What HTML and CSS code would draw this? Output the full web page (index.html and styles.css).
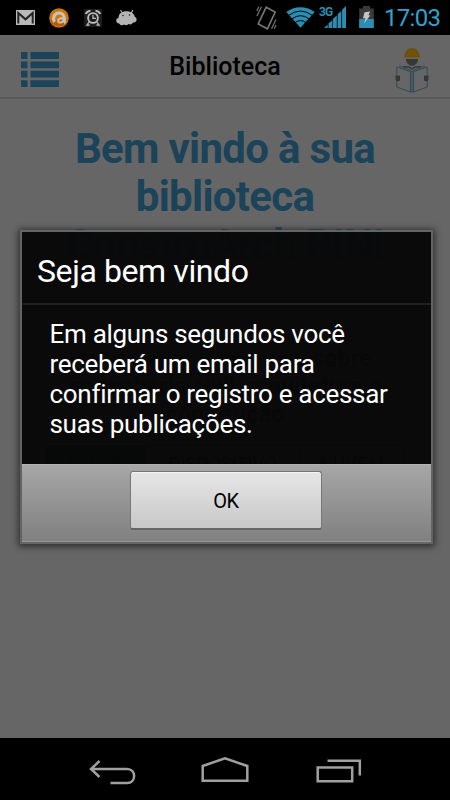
FILE: index.html
```html
<!DOCTYPE html>
<html lang="pt-BR">
<head>
  <meta charset="UTF-8">
  <meta name="viewport" content="width=device-width, initial-scale=1.0">
  <title>Biblioteca</title>
  <link rel="stylesheet" href="styles.css">
</head>
<body>
  <div class="status-bar">
    <div class="notifications">
      <svg class="icon-mail" width="19" height="15" viewBox="0 0 19 15">
        <rect width="19" height="15" fill="#b9b9b9"/>
        <path d="M2.3 13.5V3l7.2 6.3L16.7 3v10.5" fill="none" stroke="#222" stroke-width="2"/>
      </svg>
      <svg class="icon-avast" width="20" height="20" viewBox="0 0 20 20">
        <circle cx="10" cy="10" r="9.8" fill="#cb790c"/>
        <path d="M1 12a9.5 9.5 0 0 0 18 0z" fill="#b95c09"/>
        <path d="M5.500 14C3 9.500 6 5 10 5s5.300 3 5.300 5.500c0 2.500 0 3.500 1.200 4.500" fill="none" stroke="#c8c3bd" stroke-width="3"/>
        <path d="M14.500 10.500c-2.500-.5-5.500 0-5.500 2.300 0 2.500 4.500 2.200 5.500-.6" fill="none" stroke="#c8c3bd" stroke-width="2"/>
      </svg>
      <svg class="icon-alarm" width="18" height="18" viewBox="0 0 18 18">
        <rect width="18" height="18" rx="1" fill="#1d1d1d"/>
        <g fill="none" stroke="#bcbcbc">
          <circle cx="9" cy="9" r="4.900" stroke-width="1.900"/>
          <path d="M1.800 5Q3 2 6.500 1.700M16.200 5Q15 2 11.500 1.700" stroke-width="2"/>
          <path d="M9 6v3.400h3M5 13l-2 3h2.500M13 13l2 3h-2.500" stroke-width="1.300"/>
        </g>
      </svg>
      <svg class="icon-droid" width="21" height="17" viewBox="0 0 21 17">
        <path d="M4.500 1l2 3M16.800 1l-1.500 3" stroke="#b4b4b4" stroke-width="1.200"/>
        <path d="M2.500 9C2.500 4.500 6 2.300 10.500 2.300S18.500 5 18.800 8c2.200.5 2.300 3.500.9 4.800-1 .8-2 .8-2.900.9-1 2-3 2-4.300 1.200-1.500 1.500-3 1.600-4.300.6-2 1.200-4 1-5-1C1 14.300.2 13 .2 11.500.2 10 1.200 9 2.500 9z" fill="#b4b4b4"/>
        <circle cx="7" cy="6.500" r=".8" fill="#222"/><circle cx="13.500" cy="6" r=".8" fill="#222"/>
      </svg>
    </div>
    <div class="system-icons">
      <svg class="icon-vibrate" width="21" height="24" viewBox="0 0 21 24">
        <g fill="none" stroke="#777">
          <path d="M10.200 1.200l9 4.800-7.800 16.800-9.200-4.900z" stroke-width="1.600"/>
          <path d="M5.500.8L.9 10M2.800.8L.8 5M20 13.500l-4.500 9.300M20 19l-1.800 3.800" stroke-width="1.200"/>
        </g>
      </svg>
      <svg class="icon-wifi" width="29" height="21" viewBox="0 0 29 21">
        <path d="M14.500 20.700L.3 5C8-1.300 21-1.300 28.700 5z" fill="#2b8db3"/>
        <path d="M2.800 8.300q11.700-8.500 23.400 0M6 11.800q8.500-6.200 17 0M9.200 15.500q5.300-3.800 10.600 0" fill="none" stroke="#000" stroke-width="1"/>
      </svg>
      <div class="signal">
        <span class="signal-type">3G</span>
        <svg width="22" height="22" viewBox="0 0 22 22">
          <g fill="#2b8db3">
            <path d="M0 22l3.700-3.500V22zM4.500 22v-4.500L8.300 14v8zM9 22v-9.200l3.800-3.400V22zM13.600 22V8.200l3.700-3.300V22zM18.100 22V3.700L22 0v22z"/>
          </g>
        </svg>
      </div>
      <svg class="icon-battery" width="15" height="22" viewBox="0 0 15 22">
        <path d="M4 0h7v2.500h3.800V22H.2V2.500H4z" fill="#3a3a3a"/>
        <path d="M.2 13h14.600v9H.2z" fill="#2b8db3"/>
        <path d="M5.500 6.300L11 5.600l-1.500 3.700 1.800.3-6.300 8 1.600-5-2.600-.4z" fill="#c5c5c5"/>
      </svg>
      <span class="clock">17:03</span>
    </div>
  </div>

  <header class="app-header">
    <svg class="menu-icon" width="38" height="35" viewBox="0 0 38 35" fill="#1b4359">
      <path d="M0 0h6.500v7H0zM9.500 0H38v7H9.500zM0 9.500h6.500v6.700H0zM9.500 9.500H38v6.700H9.500zM0 18.800h6.500v6.700H0zM9.500 18.800H38v6.700H9.500zM0 28.200h6.500V35H0zM9.500 28.200H38V35H9.500z"/>
    </svg>
    <h1>Biblioteca</h1>
    <svg class="reader-icon" width="34" height="46" viewBox="0 0 34 46">
      <path d="M11 12h12c0 4-3 7-6 7s-6-3-6-7z" fill="#383838"/>
      <path d="M9 10.500C9.500 4 13 1 17 1s7.500 3 8 9.500z" fill="#6f5109"/>
      <path d="M8 20q6-1 9 2 3-3 9-2" fill="none" stroke="#383838" stroke-width="1.500"/>
      <g fill="none" stroke="#2f4b5a" stroke-width="1">
        <path d="M1.800 20v20l13.700 5V24.500zM32.200 20v20l-13.700 5V24.500zM15.500 24.500h3M15.500 45h3M17 24v21M4 19l12 4.500M30 19l-12 4.500"/>
      </g>
      <path d="M.5 28.500h4.500v5l-2.500 1-2-1.500zM33.500 28.500H29v5l2.500 1 2-1.500z" fill="#383838"/>
    </svg>
  </header>

  <main class="content">
    <h2>Bem vindo à sua<br>biblioteca<br>ConstruArch PINI</h2>
    <p class="intro">seus livros e manuais sobre<br>engenharia civil, arquitetura e<br>construção</p>
    <div class="tabs">
      <span class="tab active">TODOS</span>
      <span class="tab">DISPOSITIVO</span>
      <span class="tab">NUVEM</span>
    </div>
  </main>

  <nav class="nav-bar">
    <svg width="47" height="26" viewBox="0 0 47 26" fill="none" stroke="#a0a0a0" stroke-width="2.500">
      <path d="M10.500 1L2 9l8.500 8M2 9h36c9.500 0 9.500 14 0 14H21.500"/>
    </svg>
    <svg class="home" width="48" height="26" viewBox="0 0 48 26" fill="none" stroke="#a0a0a0" stroke-width="2.500">
      <path d="M1.700 23.800V9L24 1.300 46.300 9v14.800z"/>
    </svg>
    <svg class="recent" width="46" height="24" viewBox="0 0 46 24" fill="none" stroke="#a0a0a0" stroke-width="2.500">
      <path d="M1.700 8.500h34.500v13.800H1.700zM11.500 1.800h32.300v14.700"/>
    </svg>
  </nav>

  <div class="dialog">
    <h3 class="dialog-title">Seja bem vindo</h3>
    <p class="dialog-text">Em alguns segundos você<br>receberá um email para<br>confirmar o registro e acessar<br>suas publicações.</p>
    <div class="dialog-footer">
      <button class="ok">OK</button>
    </div>
  </div>
</body>
</html>
```
FILE: styles.css
```css
* {
  box-sizing: border-box;
}
body {
  font-family: Roboto, "Liberation Sans", sans-serif;
  background: #666;
  color: #000;
  margin: 0;
  height: 800px;
  display: flex;
  flex-direction: column;
  overflow: hidden;
  position: relative;
}
h1, h2, h3, p {
  margin: 0;
}
svg {
  display: block;
  flex: none;
}
.status-bar {
  height: 35px;
  background: #000;
  display: flex;
  justify-content: space-between;
  padding: 0 9px 0 16px;
}
.notifications {
  display: flex;
  align-items: center;
}
.icon-avast {
  margin-left: 14px;
}
.icon-alarm {
  margin-left: 15px;
}
.icon-droid {
  margin-left: 14px;
}
.system-icons {
  display: flex;
  align-items: flex-start;
  color: #2fa3cf;
}
.icon-vibrate {
  margin-top: 6px;
}
.icon-wifi {
  margin: 7px 0 0 9px;
}
.signal {
  display: flex;
  width: 27px;
  margin: 6px 0 0 4px;
}
.signal-type {
  font-size: 12px;
  line-height: 12px;
  font-weight: bold;
  letter-spacing: -.8px;
  width: 5px;
  color: #2b8db3;
}
.icon-battery {
  margin: 6px 0 0 13px;
}
.clock {
  width: 57px;
  margin-left: 10px;
  font-size: 24px;
  letter-spacing: -.7px;
  line-height: 37px;
  white-space: nowrap;
}
.app-header {
  height: 64px;
  border-bottom: 2px solid #595959;
  display: flex;
  align-items: flex-start;
  justify-content: space-between;
  padding: 0 21px;
}
.menu-icon {
  margin-top: 17px;
}
.app-header h1 {
  font-size: 25px;
  line-height: 28px;
  margin: 18px 4px 0 0;
  font-weight: 500;
}
.reader-icon {
  margin-top: 12px;
}
.content {
  flex: 1;
  padding-top: 26px;
  text-align: center;
}
.content h2 {
  color: #1b4359;
  font-size: 42px;
  line-height: 48px;
  letter-spacing: -.7px;
}
.intro {
  color: #1b2b35;
  font-size: 23.500px;
  line-height: 28px;
  font-weight: bold;
  margin-top: 75px;
}
.tabs {
  width: 360px;
  height: 40px;
  margin: 17px auto 0;
  border: 1px solid #222;
  border-radius: 4px;
  display: flex;
  font-size: 19px;
  line-height: 36px;
}
.tab {
  flex: 1;
}
.tab:nth-child(2) {
  flex: none;
  width: 154px;
  border-right: 1px solid #222;
  letter-spacing: -.3px;
}
.tab.active {
  flex: none;
  width: 100px;
  background: #123a4c;
}
.nav-bar {
  height: 62px;
  background: #000;
  display: flex;
  align-items: flex-start;
  padding: 22px 0 0 89px;
}
.nav-bar .home {
  margin: -3px 0 0 65px;
}
.nav-bar .recent {
  margin: -1px 0 0 67px;
}
.dialog {
  position: absolute;
  left: 20px;
  top: 230px;
  width: 413px;
  height: 314px;
  border: 2px solid #646464;
  border-radius: 1px;
  background: rgba(7, 7, 7, .965);
  color: #fff;
  box-shadow: 0 1px 6px 2px #333;
  display: flex;
  flex-direction: column;
}
.dialog-title {
  height: 73px;
  border-bottom: 2px solid #202020;
  font-size: 32px;
  letter-spacing: -.4px;
  font-weight: normal;
  line-height: 79px;
  padding-left: 15px;
}
.dialog-text {
  flex: 1;
  font-size: 26px;
  letter-spacing: -.3px;
  line-height: 30px;
  padding: 14px 0 0 27.500px;
  white-space: nowrap;
}
.dialog-footer {
  height: 78px;
  border-top: 1px solid #b2b2b2;
  background: linear-gradient(#a6a6a6, #808080);
  box-shadow: inset 0 -1px #969696;
  padding-top: 6px;
}
.ok {
  display: block;
  width: 192px;
  height: 59px;
  margin: 0 0 0 108px;
  border: 1px solid #777;
  border-bottom: 2px solid #666;
  border-radius: 3px;
  background: linear-gradient(#e6e6e6, #c8c8c8);
  box-shadow: inset 0 1px #f5f5f5;
  color: #000;
  font-family: inherit;
  font-size: 20px;
  letter-spacing: -.5px;
  padding-top: 3px;
}
```
